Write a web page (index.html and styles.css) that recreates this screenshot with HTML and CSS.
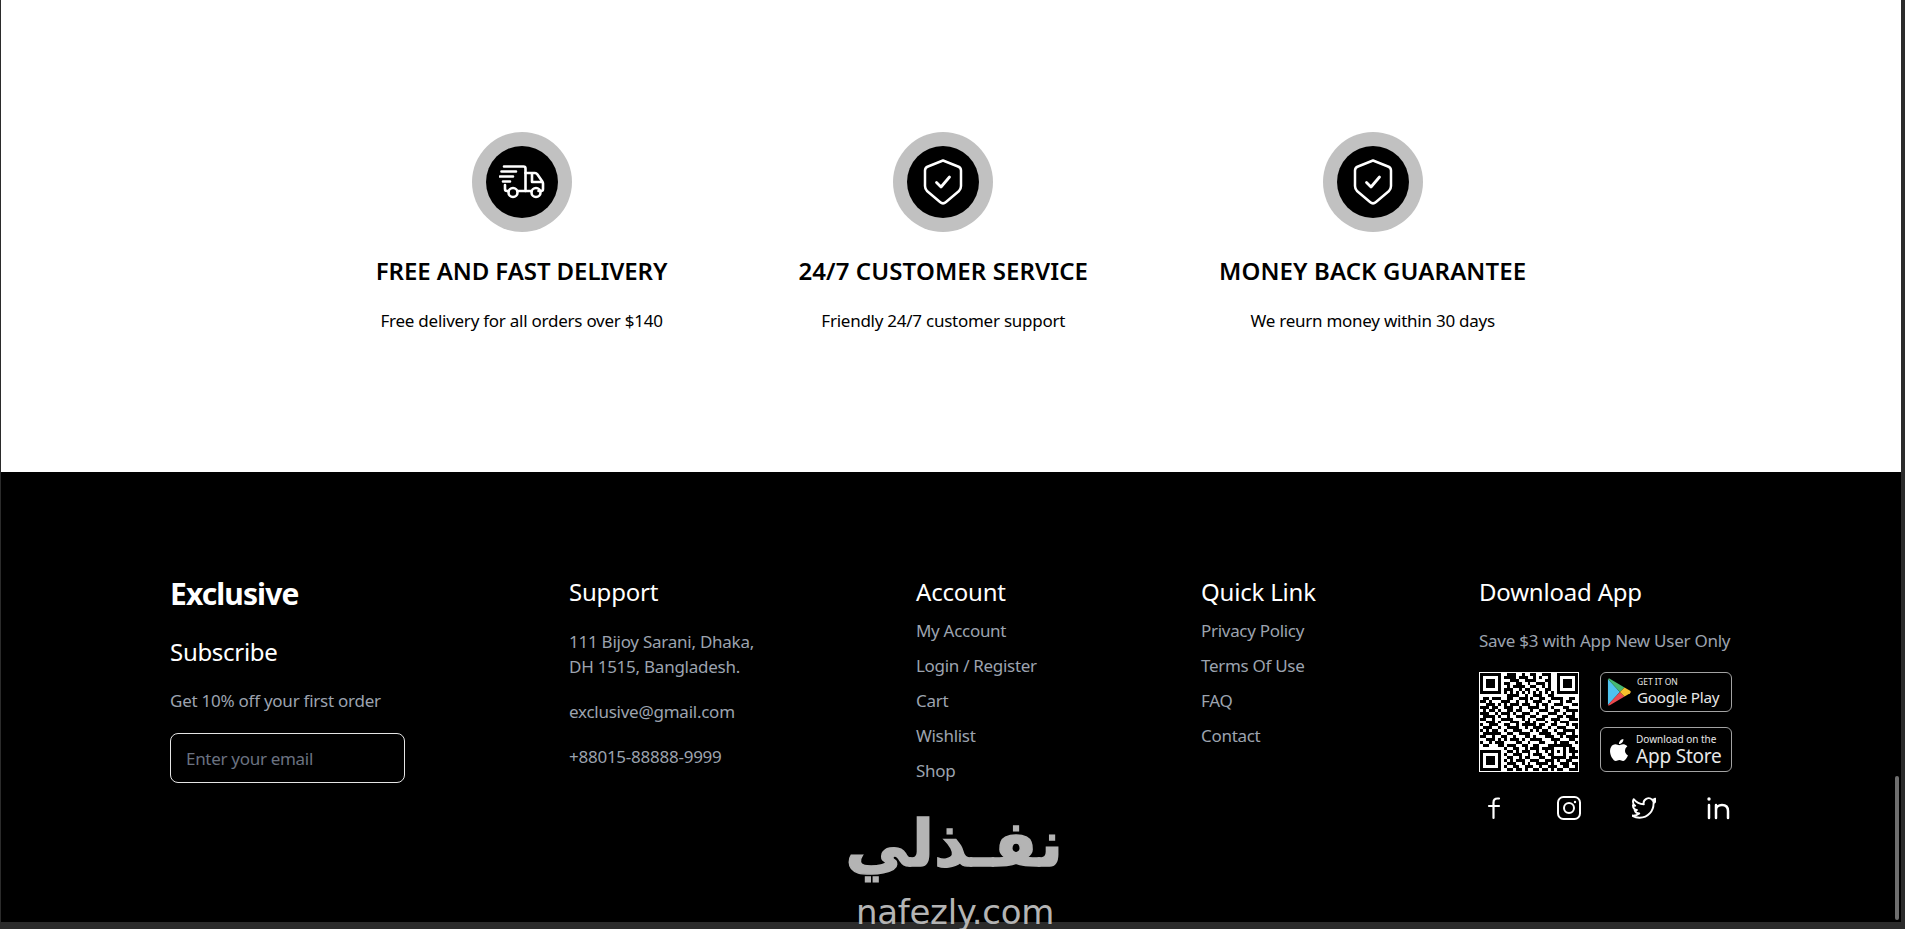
FILE: index.html
```html
<!DOCTYPE html>
<html lang="en">
<head>
  <meta charset="UTF-8" />
  <title>Exclusive</title>
  <link rel="stylesheet" href="styles.css">
</head>
<body>
  <main class="services">
    <div class="service">
      <div class="service-ring"><div class="service-icon">
        <svg viewBox="0 0 46 34" width="46" height="34" fill="none" stroke="#fff" stroke-width="2.600" stroke-linecap="round" stroke-linejoin="round">
          <path d="M5 1.500h19.500c1.200 0 2 .8 2 2V26H18.500"/>
          <path d="M2.500 6.500H17M1 11.500h13M4 16.500h7"/>
          <path d="M26.500 8h9.500c1 0 1.700.4 2.300 1.200l5 7.300c.4.600.7 1.300.7 2V24c0 1.200-.8 2-2 2h-2.500"/>
          <path d="M26.500 26h6"/>
          <path d="M6 20v4c0 1.200.8 2 2 2h1.500"/>
          <path d="M33 9v8h10"/>
          <circle cx="14" cy="27.500" r="4.500"/>
          <circle cx="37" cy="27.500" r="4.500"/>
        </svg>
      </div></div>
      <h3 class="service-title">FREE AND FAST DELIVERY</h3>
      <p class="service-text">Free delivery for all orders over $140</p>
    </div>
    <div class="service">
      <div class="service-ring"><div class="service-icon">
        <svg viewBox="0 0 40 46" width="40" height="46" fill="none" stroke="#fff" stroke-width="2.500" stroke-linecap="round" stroke-linejoin="round">
          <path d="M20 1.500 35 7.500c1.600.6 3 1.800 3 4V27c0 2-.7 3.500-2 5L23 43c-1.800 1.600-4.200 1.600-6 0L4 32c-1.300-1.500-2-3-2-5V11.500c0-2.200 1.400-3.400 3-4z"/>
          <path d="M13.500 23.500 18 28l8.500-10" stroke-width="2.800"/>
        </svg>
      </div></div>
      <h3 class="service-title">24/7 CUSTOMER SERVICE</h3>
      <p class="service-text">Friendly 24/7 customer support</p>
    </div>
    <div class="service">
      <div class="service-ring"><div class="service-icon">
        <svg viewBox="0 0 40 46" width="40" height="46" fill="none" stroke="#fff" stroke-width="2.500" stroke-linecap="round" stroke-linejoin="round">
          <path d="M20 1.500 35 7.500c1.600.6 3 1.800 3 4V27c0 2-.7 3.500-2 5L23 43c-1.800 1.600-4.200 1.600-6 0L4 32c-1.300-1.500-2-3-2-5V11.500c0-2.200 1.400-3.400 3-4z"/>
          <path d="M13.500 23.500 18 28l8.500-10" stroke-width="2.800"/>
        </svg>
      </div></div>
      <h3 class="service-title">MONEY BACK GUARANTEE</h3>
      <p class="service-text">We reurn money within 30 days</p>
    </div>
  </main>

  <footer class="footer">
    <div class="footer-cols">
      <div class="col col-brand">
        <h2 class="brand">Exclusive</h2>
        <h4 class="subscribe">Subscribe</h4>
        <p class="offer">Get 10% off your first order</p>
        <input class="email" type="text" placeholder="Enter your email">
      </div>
      <div class="col col-support">
        <h4 class="col-title">Support</h4>
        <p class="address">111 Bijoy Sarani, Dhaka,<br>DH 1515, Bangladesh.</p>
        <p class="contact-line">exclusive@gmail.com</p>
        <p class="contact-line">+88015-88888-9999</p>
      </div>
      <div class="col col-account">
        <h4 class="col-title">Account</h4>
        <ul class="links">
          <li>My Account</li>
          <li>Login / Register</li>
          <li>Cart</li>
          <li>Wishlist</li>
          <li>Shop</li>
        </ul>
      </div>
      <div class="col col-quick">
        <h4 class="col-title">Quick Link</h4>
        <ul class="links">
          <li>Privacy Policy</li>
          <li>Terms Of Use</li>
          <li>FAQ</li>
          <li>Contact</li>
        </ul>
      </div>
      <div class="col col-app">
        <h4 class="col-title">Download App</h4>
        <p class="save">Save $3 with App New User Only</p>
        <div class="app-row">
          <svg class="qr" viewBox="-0.5 -0.5 34 34" width="100" height="100" shape-rendering="crispEdges">
            <rect x="-0.5" y="-0.5" width="34" height="34" fill="#fff"/>
            <path fill="none" stroke="#000" d="M0 .5h7M9 .5h3M14 .5h1M17 .5h2M21 .5h3M26 .5h7
              M0 1.500h1M6 1.500h1M8 1.500h4M13 1.500h3M18 1.500h1M20 1.500h1M23 1.500h1M26 1.500h1M32 1.500h1
              M0 2.500h1M2 2.500h3M6 2.500h1M10 2.500h3M15 2.500h4M22 2.500h2M26 2.500h1M28 2.500h3M32 2.500h1
              M0 3.500h1M2 3.500h3M6 3.500h1M8 3.500h2M12 3.500h2M16 3.500h1M19 3.500h3M23 3.500h1M26 3.500h1M28 3.500h3M32 3.500h1
              M0 4.500h1M2 4.500h3M6 4.500h1M9 4.500h1M11 4.500h4M17 4.500h2M21 4.500h1M23 4.500h1M26 4.500h1M28 4.500h3M32 4.500h1
              M0 5.500h1M6 5.500h1M8 5.500h3M13 5.500h1M15 5.500h2M19 5.500h1M22 5.500h2M26 5.500h1M32 5.500h1
              M0 6.500h7M8 6.500h1M10 6.500h1M12 6.500h1M14 6.500h1M16 6.500h1M18 6.500h1M20 6.500h1M22 6.500h1M24 6.500h1M26 6.500h7
              M9 7.500h4M15 7.500h1M18 7.500h3M23 7.500h2
              M1 8.500h2M4 8.500h3M9 8.500h2M13 8.500h3M17 8.500h1M20 8.500h2M24 8.500h4M30 8.500h2
              M0 9.500h2M3 9.500h1M7 9.500h3M12 9.500h1M15 9.500h1M18 9.500h3M23 9.500h1M27 9.500h1M29 9.500h2
              M2 10.500h3M6 10.500h1M8 10.500h1M10 10.500h3M14 10.500h3M19 10.500h1M21 10.500h2M25 10.500h3M31 10.500h2
              M0 11.500h3M4 11.500h2M8 11.500h3M13 11.500h1M16 11.500h4M22 11.500h1M24 11.500h1M28 11.500h2
              M1 12.500h1M3 12.500h2M6 12.500h1M9 12.500h2M12 12.500h2M17 12.500h1M20 12.500h3M25 12.500h2M29 12.500h4
              M0 13.500h3M5 13.500h1M7 13.500h3M11 13.500h1M14 13.500h3M19 13.500h1M23 13.500h3M28 13.500h1M31 13.500h1
              M1 14.500h4M6 14.500h1M9 14.500h1M12 14.500h3M17 14.500h2M21 14.500h2M26 14.500h2M29 14.500h3
              M0 15.500h2M4 15.500h1M7 15.500h4M14 15.500h1M16 15.500h1M19 15.500h3M24 15.500h3M30 15.500h3
              M2 16.500h3M6 16.500h1M10 16.500h3M15 16.500h2M18 16.500h1M22 16.500h1M25 16.500h1M27 16.500h3
              M0 17.500h1M3 17.500h3M8 17.500h2M12 17.500h1M14 17.500h5M20 17.500h2M24 17.500h2M29 17.500h1M31 17.500h2
              M1 18.500h3M6 18.500h1M9 18.500h4M15 18.500h1M18 18.500h3M23 18.500h1M26 18.500h3M32 18.500h1
              M0 19.500h1M2 19.500h1M4 19.500h2M8 19.500h1M11 19.500h3M17 19.500h1M19 19.500h1M21 19.500h2M25 19.500h1M28 19.500h4
              M1 20.500h5M6 20.500h1M9 20.500h2M13 20.500h4M20 20.500h4M26 20.500h3M31 20.500h1
              M0 21.500h2M4 21.500h1M7 21.500h2M11 21.500h1M15 21.500h2M18 21.500h1M22 21.500h3M27 21.500h1M29 21.500h4
              M2 22.500h3M6 22.500h1M8 22.500h1M10 22.500h3M14 22.500h1M17 22.500h4M24 22.500h3M30 22.500h2
              M0 23.500h1M3 23.500h1M5 23.500h3M12 23.500h2M16 23.500h1M20 23.500h2M25 23.500h1M27 23.500h3M32 23.500h1
              M1 24.500h2M6 24.500h2M9 24.500h3M14 24.500h2M18 24.500h2M23 24.500h8
              M8 25.500h1M11 25.500h2M15 25.500h1M17 25.500h3M21 25.500h3M24 25.500h1M28 25.500h1M30 25.500h2
              M0 26.500h7M9 26.500h2M12 26.500h1M14 26.500h3M19 26.500h1M22 26.500h1M24 26.500h1M26 26.500h1M28 26.500h1M30 26.500h3
              M0 27.500h1M6 27.500h1M8 27.500h1M11 27.500h3M16 27.500h1M18 27.500h3M23 27.500h2M28 27.500h1M31 27.500h1
              M0 28.500h1M2 28.500h3M6 28.500h1M9 28.500h2M13 28.500h1M15 28.500h2M20 28.500h2M24 28.500h5M30 28.500h3
              M0 29.500h1M2 29.500h3M6 29.500h1M8 29.500h1M10 29.500h1M12 29.500h3M17 29.500h3M22 29.500h3M26 29.500h1M29 29.500h2
              M0 30.500h1M2 30.500h3M6 30.500h1M9 30.500h3M14 30.500h1M16 30.500h1M19 30.500h4M24 30.500h1M27 30.500h3M31 30.500h2
              M0 31.500h1M6 31.500h1M8 31.500h1M11 31.500h2M15 31.500h3M20 31.500h1M23 31.500h3M28 31.500h2M32 31.500h1
              M0 32.500h7M9 32.500h2M12 32.500h2M15 32.500h1M18 32.500h2M21 32.500h2M24 32.500h1M26 32.500h2M30 32.500h3"/>
          </svg>
          <div class="badges">
            <div class="badge badge-play">
              <svg class="play" viewBox="0 0 26 30" width="24" height="28">
                <path fill="#4fc3ee" d="M1 1v28l13-14z"/>
                <path fill="#47b872" d="M1 1c.5-.6 1.500-.8 2.500-.2L19 10l-5 5z"/>
                <path fill="#ea4a4f" d="M1 29c.5.6 1.500.8 2.500.2L19 20l-5-5z"/>
                <path fill="#f7bf2c" d="M19 10l6 3.700c1 .7 1 1.900 0 2.600L19 20l-5-5z"/>
              </svg>
              <div class="badge-text">
                <span class="badge-caps">GET IT ON</span>
                <span class="badge-google">Google Play</span>
              </div>
            </div>
            <div class="badge badge-store">
              <svg class="apple" viewBox="0 0 24 24" width="22" height="26" fill="#fff">
                <path d="M12.152 6.896c-.948 0-2.415-1.078-3.960-1.040-2.040.027-3.910 1.183-4.961 3.014-2.117 3.675-.546 9.103 1.519 12.090 1.013 1.454 2.208 3.090 3.792 3.039 1.520-.065 2.090-.987 3.935-.987 1.831 0 2.350.987 3.960.948 1.637-.026 2.676-1.480 3.676-2.948 1.156-1.688 1.636-3.325 1.662-3.415-.039-.013-3.182-1.221-3.220-4.857-.026-3.040 2.480-4.494 2.597-4.559-1.429-2.090-3.623-2.324-4.390-2.376-2-.156-3.675 1.090-4.610 1.090zM15.530 3.830c.843-1.012 1.400-2.427 1.245-3.830-1.207.052-2.662.805-3.532 1.818-.780.896-1.454 2.338-1.273 3.714 1.338.104 2.715-.688 3.559-1.701"/>
              </svg>
              <div class="badge-text">
                <span class="badge-small">Download on the</span>
                <span class="badge-apple">App Store</span>
              </div>
            </div>
          </div>
        </div>
        <div class="socials">
          <svg viewBox="0 0 24 24" width="24" height="24" fill="none" stroke="#fff" stroke-width="2.200" stroke-linecap="round">
            <path d="M17 2.500h-1.500c-2.500 0-4 1.500-4 4V22M7 10h10"/>
          </svg>
          <svg viewBox="0 0 24 24" width="24" height="24" fill="none" stroke="#fff" stroke-width="2">
            <rect x="1" y="1" width="22" height="22" rx="5.500"/>
            <circle cx="12" cy="12" r="5"/>
            <circle cx="18" cy="6" r="1.200" fill="#fff" stroke="none"/>
          </svg>
          <svg viewBox="0 0 24 24" width="24" height="24" fill="none" stroke="#fff" stroke-width="1.900" stroke-linejoin="round">
            <path d="M23.953 4.570a10 10 0 01-2.825.775 4.958 4.958 0 002.163-2.723c-.951.555-2.005.959-3.127 1.184a4.920 4.920 0 00-8.384 4.482C7.690 8.095 4.067 6.130 1.640 3.162a4.822 4.822 0 00-.666 2.475c0 1.710.870 3.213 2.188 4.096a4.904 4.904 0 01-2.228-.616v.060a4.923 4.923 0 003.946 4.827 4.996 4.996 0 01-2.212.085 4.936 4.936 0 004.604 3.417 9.867 9.867 0 01-6.102 2.105c-.390 0-.779-.023-1.170-.067a13.995 13.995 0 007.557 2.209c9.053 0 13.998-7.496 13.998-13.985 0-.210 0-.420-.015-.630A9.935 9.935 0 0024 4.590z"/>
          </svg>
          <svg viewBox="0 0 24 24" width="24" height="24" fill="none" stroke="#fff" stroke-width="2.500" stroke-linecap="round">
            <path d="M2 9v13M9 22V9M9 14c0-3 2.500-5 6-5s6 2 6 6v7"/>
            <circle cx="2" cy="3" r="1.700" fill="#fff" stroke="none"/>
          </svg>
        </div>
      </div>
    </div>
    <div class="scroll-thumb"></div>
  </footer>

  <div class="watermark">
    <div class="wm-ar" dir="rtl" lang="ar">نفـذلي</div>
    <div class="wm-en">nafezly.com</div>
  </div>
</body>
</html>
```

FILE: styles.css
```css
* { box-sizing: border-box; }

html, body { height: 100%; }

body {
  margin: 0;
  padding: 0 4px 7px 1px;
  background: #2b2b2b;
  display: flex;
  flex-direction: column;
  position: relative;
  overflow: hidden;
  font-family: "Noto Sans", "Open Sans", sans-serif;
}

/* services */
.services {
  height: 472px;
  flex: none;
  background: #fff;
  padding-top: 132px;
  display: flex;
  justify-content: center;
  gap: 131px;
  color: #000;
}
.service { display: flex; flex-direction: column; align-items: center; }
.service-ring {
  width: 100px;
  height: 100px;
  border-radius: 50%;
  background: #c1c1c1;
  display: flex;
  align-items: center;
  justify-content: center;
}
.service-icon {
  width: 72px;
  height: 72px;
  border-radius: 50%;
  background: #000;
  display: flex;
  align-items: center;
  justify-content: center;
}
.service-title {
  margin: 23px 0 0;
  font-size: 24px;
  line-height: 32px;
  font-weight: 600;
  letter-spacing: 0.1px;
}
.service:first-child .service-title { letter-spacing: -0.08px; }
.service-text {
  margin: 22px 0 0;
  font-size: 17px;
  line-height: 24px;
  letter-spacing: -0.25px;
}

/* footer */
.footer {
  flex: 1;
  position: relative;
  overflow: hidden;
  background: #000;
  color: #fff;
}
.footer-cols {
  display: flex;
  justify-content: center;
  gap: 163px;
  padding-top: 104px;
}
.col { flex: none; }
.col-brand { width: 236px; }
.col-support { width: 184px; }
.col-account { width: 122px; }
.col-quick { width: 115px; }
.col-app { width: 253px; }

.brand {
  margin: 0;
  font-size: 30px;
  line-height: 36px;
  font-weight: 700;
  letter-spacing: -0.9px;
}
.subscribe {
  margin: 24px 0 0;
  font-size: 24px;
  line-height: 32px;
  font-weight: 400;
  letter-spacing: -0.3px;
}
.offer {
  margin: 21px 0 0;
  font-size: 17px;
  line-height: 24px;
  color: #9ca3af;
  letter-spacing: -0.25px;
}
.email {
  display: block;
  width: 235px;
  height: 50px;
  margin-top: 20px;
  padding: 0 15px;
  background: transparent;
  border: 1px solid #e5e5e5;
  border-radius: 8px;
  color: #fff;
  font: inherit;
  font-size: 17px;
  letter-spacing: -0.3px;
}
.email::placeholder { color: #6b7280; }

.col-title {
  margin: 0;
  font-size: 24px;
  line-height: 32px;
  font-weight: 400;
  letter-spacing: -0.2px;
}
.address, .contact-line, .save {
  color: #9ca3af;
  font-size: 17px;
  line-height: 25px;
  letter-spacing: -0.25px;
  white-space: nowrap;
}
.address { margin: 21px 0 0; }
.contact-line { margin: 20px 0 0; }
.save { margin: 20px 0 0; }

.links {
  list-style: none;
  margin: 11px 0 0;
  padding: 0;
  color: #9ca3af;
  font-size: 17px;
  line-height: 24px;
  letter-spacing: -0.3px;
}
.links li { margin-bottom: 11px; }

.app-row { display: flex; gap: 21px; margin-top: 19px; }
.qr { display: block; flex: none; }
.badges { display: flex; flex-direction: column; gap: 15px; }
.badge {
  width: 132px;
  border: 1px solid #a3a3a3;
  border-radius: 6px;
  background: #000;
  display: flex;
  align-items: center;
  gap: 6px;
}
.badge-play { height: 40px; padding-left: 6px; }
.badge-store { height: 45px; padding-left: 7px; }
.play, .apple { flex: none; }
.badge-text { display: flex; flex-direction: column; color: #e8e8e8; white-space: nowrap; }
.badge-caps { font-size: 8.500px; line-height: 10px; }
.badge-small { font-size: 10px; line-height: 12px; }
.badge-google { font-size: 15.200px; line-height: 20px; letter-spacing: -0.2px; }
.badge-apple { font-size: 19px; line-height: 22px; letter-spacing: -0.2px; }

.socials {
  display: flex;
  justify-content: space-between;
  margin-top: 24px;
  padding: 0 1px 0 3px;
}

/* logo stamped over the page */
.watermark {
  position: absolute;
  left: 849px;
  top: 800px;
  width: 214px;
  text-align: center;
  color: #b4b4b4;
}
.wm-ar {
  font-family: "DejaVu Sans", sans-serif;
  font-weight: 700;
  font-size: 64px;
  line-height: 88px;
  white-space: nowrap;
  -webkit-text-stroke: 1.500px #b4b4b4;
}
.wm-en {
  margin: 6px 0 0 -2px;
  font-family: "DejaVu Sans", sans-serif;
  font-size: 34px;
  line-height: 36px;
  letter-spacing: -0.3px;
  white-space: nowrap;
}

.scroll-thumb {
  position: absolute;
  right: 2px;
  top: 304px;
  width: 4px;
  height: 144px;
  border-radius: 2px;
  background: #6e6e6e;
}
```
